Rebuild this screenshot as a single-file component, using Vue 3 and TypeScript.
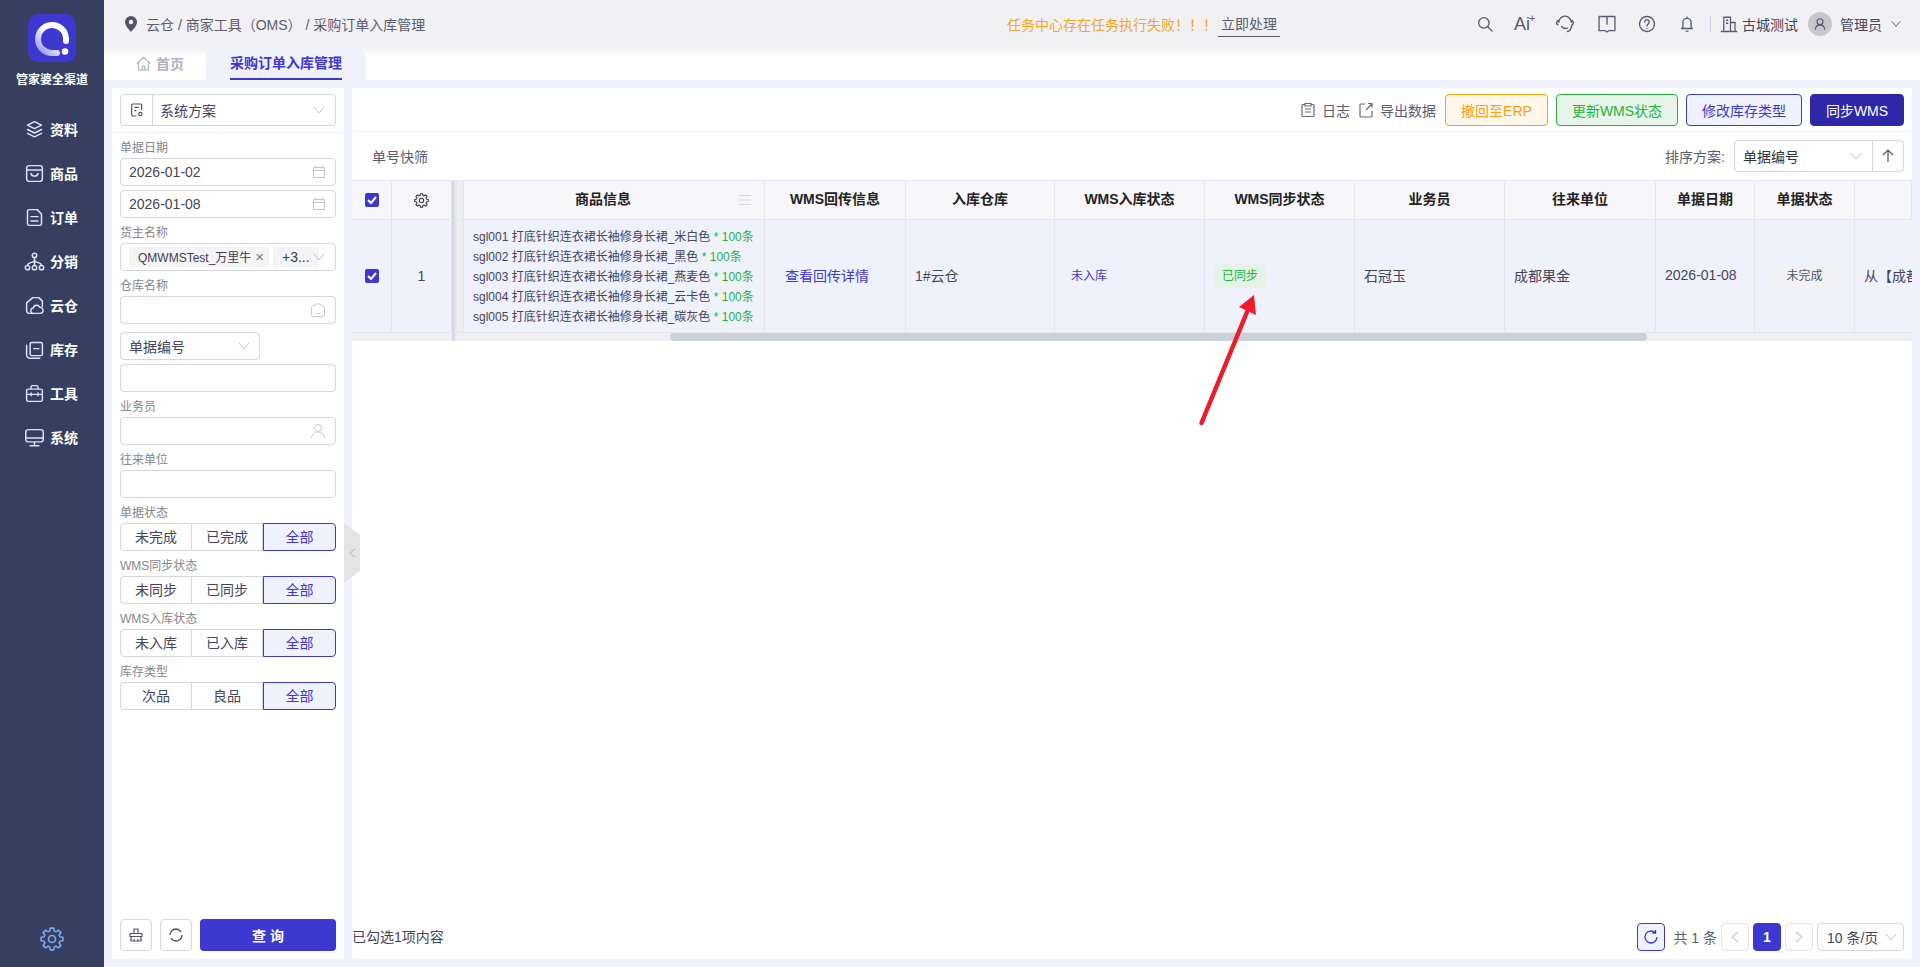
<script setup lang="ts">
interface NavItem {
  label: string
  d: string
}

const navItems: NavItem[] = [
  { label: '资料', d: 'M12 3l8 4-8 4-8-4zM4 12l8 4 8-4M4 16.500l8 4 8-4' },
  { label: '商品', d: 'M6 3h12a3 3 0 013 3v12a3 3 0 01-3 3H6a3 3 0 01-3-3V6a3 3 0 013-3zM3 8h18M8 12c1 4 7 4 8 0' },
  { label: '订单', d: 'M6 3h9l5 5v11a2 2 0 01-2 2H6a2 2 0 01-2-2V5a2 2 0 012-2zM8 11h8M8 16h8' },
  { label: '分销', d: 'M12 2.500a2.500 2.500 0 110 5 2.500 2.500 0 010-5zM4 16.500a2.500 2.500 0 110 5 2.500 2.500 0 010-5zM12 16.500a2.500 2.500 0 110 5 2.500 2.500 0 010-5zM20 16.500a2.500 2.500 0 110 5 2.500 2.500 0 010-5zM12 7.500v9M4 16.500c0-4 8-3 8-6 0 3 8 2 8 6' },
  { label: '云仓', d: 'M9 21H6a3 3 0 01-3-3V9l7-6h7l4 4v6M11 21a3 3 0 01-.5-6 4 4 0 017.500-1 3.500 3.500 0 01.5 7z' },
  { label: '库存', d: 'M7 6a2 2 0 012-2h10a2 2 0 012 2v11a2 2 0 01-2 2H9a2 2 0 01-2-2zM3 7v11a4 4 0 004 4h11M11 11h6' },
  { label: '工具', d: 'M3 9a2 2 0 012-2h14a2 2 0 012 2v10a2 2 0 01-2 2H5a2 2 0 01-2-2zM8 7V5a2 2 0 012-2h4a2 2 0 012 2v2M3 13h18M8 11.500v3M16 11.500v3' },
  { label: '系统', d: 'M5 3h14a3 3 0 013 3v8a3 3 0 01-3 3H5a3 3 0 01-3-3V6a3 3 0 013-3zM2 12.500h20M12 17v4M7 21.500h10' }
]

const segments = [
  { label: '单据状态', options: ['未完成', '已完成', '全部'] },
  { label: 'WMS同步状态', options: ['未同步', '已同步', '全部'] },
  { label: 'WMS入库状态', options: ['未入库', '已入库', '全部'] },
  { label: '库存类型', options: ['次品', '良品', '全部'] }
]

const headers = ['WMS回传信息', '入库仓库', 'WMS入库状态', 'WMS同步状态', '业务员', '往来单位', '单据日期', '单据状态', '']

const goods = [
  { sku: 'sgl001', color: '米白色' },
  { sku: 'sgl002', color: '黑色' },
  { sku: 'sgl003', color: '燕麦色' },
  { sku: 'sgl004', color: '云卡色' },
  { sku: 'sgl005', color: '碳灰色' }
]

// eight toothed cog, centred on 12,12
const cogPath = (() => {
  const pts: string[] = []
  for (let i = 0; i < 8; i++) {
    const a = (i * Math.PI) / 4
    for (const [off, r] of [[-0.28, 8.2], [-0.16, 11], [0.16, 11], [0.28, 8.2]]) {
      pts.push(`${(12 + r * Math.cos(a + off)).toFixed(2)} ${(12 + r * Math.sin(a + off)).toFixed(2)}`)
    }
  }
  return `M${pts.join('L')}Z`
})()
</script>

<template>
  <div class="app">
    <aside class="sidebar">
      <div class="logo">
        <svg width="48" height="48" viewBox="0 0 48 48">
          <defs>
            <linearGradient id="ring" x1="0" y1="1" x2="1" y2="0">
              <stop offset="0.1" stop-color="#a5a2ea" />
              <stop offset="0.55" stop-color="#ffffff" />
            </linearGradient>
          </defs>
          <rect width="48" height="48" rx="10" fill="#3d38d0" />
          <path d="M38 27v-3a14 14 0 1 0-14 15h5" fill="none" stroke="url(#ring)" stroke-width="6" stroke-linecap="round" />
          <circle cx="37" cy="37.500" r="3.300" fill="#fff" />
        </svg>
      </div>
      <div class="brand">管家婆全渠道</div>
      <nav class="nav">
        <a v-for="item in navItems" :key="item.label" class="nav-item">
          <svg width="21" height="21" viewBox="0 0 24 24" fill="none" stroke="#dbe3fa" stroke-width="1.700" stroke-linejoin="round" stroke-linecap="round">
            <path :d="item.d" />
          </svg>
          <span>{{ item.label }}</span>
        </a>
      </nav>
      <div class="nav-gear">
        <svg width="24" height="24" viewBox="0 0 24 24" fill="none" stroke="#7fa6ee" stroke-width="1.600" stroke-linejoin="round">
          <path :d="cogPath" />
          <circle cx="12" cy="12" r="3.500" />
        </svg>
      </div>
    </aside>

    <div class="page">
      <header class="topbar">
        <div class="crumbs">
          <svg width="12" height="16" viewBox="0 0 12 16">
            <path d="M6 0a6 6 0 016 6c0 3.500-3.500 7-6 10C3.500 13 0 9.500 0 6a6 6 0 016-6z" fill="#55556a" />
            <circle cx="6" cy="6" r="2.200" fill="#f1f1f4" />
          </svg>
          <span>云仓 / 商家工具（OMS） / 采购订单入库管理</span>
        </div>
        <div class="notice">
          <span class="notice-text">任务中心存在任务执行失败！！！</span>
          <span class="notice-link">立即处理</span>
        </div>
        <div class="tools">
          <svg class="tool" width="18" height="18" viewBox="0 0 24 24" fill="none" stroke="#5b5b6e" stroke-width="1.800" stroke-linecap="round">
            <circle cx="10.500" cy="10.500" r="7" /><path d="M16 16l5.500 5.500" />
          </svg>
          <span class="tool tool-ai">Ai<i>+</i></span>
          <svg class="tool" width="20" height="20" viewBox="0 0 24 24" fill="none" stroke="#5b5b6e" stroke-width="1.700" stroke-linecap="round">
            <path d="M4.500 10a7.500 7.500 0 0115 0M3.500 8c-2 1-2 4 0 5M20.500 8c2 1 2 4 0 5M8 15c2 2.500 5 2.500 7 2M15 21c3-.5 4.500-3 5-7" />
          </svg>
          <svg class="tool tool-book" width="20" height="20" viewBox="0 0 24 24" fill="none" stroke="#5b5b6e" stroke-width="1.600" stroke-linejoin="round">
            <path d="M2.500 3h19v17H14l-2 1.500L10 20H2.500zM12 3v10" />
          </svg>
          <svg class="tool" width="18" height="18" viewBox="0 0 24 24" fill="none" stroke="#5b5b6e" stroke-width="1.800" stroke-linecap="round">
            <circle cx="12" cy="12" r="10" /><path d="M9 9.500a3 3 0 115 2c-1 .8-2 1.300-2 3M12 17.800v.2" />
          </svg>
          <svg class="tool tool-bell" width="18" height="18" viewBox="0 0 24 24" fill="none" stroke="#5b5b6e" stroke-width="1.800" stroke-linejoin="round">
            <path d="M6.500 18V10a5.500 5.500 0 0111 0v8zM4 18h16M10 21.500h4M12 2v2.500" />
          </svg>
          <i class="tools-sep"></i>
          <svg width="18" height="18" viewBox="0 0 24 24" fill="none" stroke="#5b5b6e" stroke-width="1.700">
            <path d="M5 22V3h9v19M14 10h6v12M1 22h22M8 7h3M8 11h3" />
          </svg>
          <span class="org">古城测试</span>
          <span class="avatar">
            <svg width="14" height="14" viewBox="0 0 24 24" fill="none" stroke="#55556a" stroke-width="2">
              <circle cx="12" cy="8" r="5" /><path d="M4 22c0-5 3-8 8-8s8 3 8 8" />
            </svg>
          </span>
          <span class="user">管理员</span>
          <svg width="12" height="12" viewBox="0 0 12 12" fill="none" stroke="#6b6b7c"><path d="M2 3.500l4 5 4-5" /></svg>
        </div>
      </header>

      <div class="tabs">
        <a class="tab tab-home">
          <svg width="15" height="15" viewBox="0 0 24 24" fill="none" stroke="#b4b9c8" stroke-width="2">
            <path d="M1 12L12 2l11 10M4 10v12h16V10M10 22v-6h4v6" />
          </svg>
          首页
        </a>
        <a class="tab tab-active"><span>采购订单入库管理</span></a>
      </div>

      <div class="content">
        <section class="filter">
          <div class="scheme">
            <span class="scheme-icon">
              <svg width="16" height="16" viewBox="0 0 24 24" fill="none" stroke="#55556a" stroke-width="1.800">
                <path d="M11 21H6a2 2 0 01-2-2V5a2 2 0 012-2h11a2 2 0 012 2v7M8 8h7M8 13h3" /><circle cx="17" cy="18" r="2.500" />
              </svg>
            </span>
            <span class="scheme-text">系统方案</span>
            <svg class="chev" width="12" height="12" viewBox="0 0 12 12" fill="none" stroke="#c4c6cf"><path d="M1 3l5 6 5-6" /></svg>
          </div>
          <div class="filter-body">
            <label class="field-label field-first">单据日期</label>
            <div class="input">
              <span>2026-01-02</span>
              <svg width="14" height="14" viewBox="0 0 14 14" fill="none" stroke="#c4c6cf"><path d="M1.500 2.500h11v10h-11zM1.500 5.500h11M4 .5v3M10 .5v3" /></svg>
            </div>
            <div class="input input-next">
              <span>2026-01-08</span>
              <svg width="14" height="14" viewBox="0 0 14 14" fill="none" stroke="#c4c6cf"><path d="M1.500 2.500h11v10h-11zM1.500 5.500h11M4 .5v3M10 .5v3" /></svg>
            </div>
            <label class="field-label">货主名称</label>
            <div class="input input-tags">
              <span class="tag">QMWMSTest_万里牛<i>×</i></span>
              <span class="tag tag-more">+3...</span>
              <svg class="tags-chev" width="12" height="12" viewBox="0 0 12 12" fill="none" stroke="#c4c6cf"><path d="M1 3l5 6 5-6" /></svg>
            </div>
            <label class="field-label">仓库名称</label>
            <div class="input">
              <span></span>
              <svg width="16" height="16" viewBox="0 0 16 16" fill="none" stroke="#c9c9d2"><path d="M1.500 5L8 1.500 14.500 5v8a1.500 1.500 0 01-1.500 1.500H3A1.500 1.500 0 011.500 13zM5.500 11.500h5" /></svg>
            </div>
            <div class="input input-select">
              <span>单据编号</span>
              <svg width="12" height="12" viewBox="0 0 12 12" fill="none" stroke="#c4c6cf"><path d="M1 3l5 6 5-6" /></svg>
            </div>
            <div class="input input-next"></div>
            <label class="field-label">业务员</label>
            <div class="input">
              <span></span>
              <svg width="16" height="16" viewBox="0 0 16 16" fill="none" stroke="#c9c9d2"><circle cx="8" cy="5" r="3.500" /><path d="M1.500 15c.5-4 3-6 6.500-6s6 2 6.500 6" /></svg>
            </div>
            <label class="field-label">往来单位</label>
            <div class="input"></div>
            <template v-for="group in segments" :key="group.label">
              <label class="field-label">{{ group.label }}</label>
              <div class="segment">
                <span v-for="(opt, i) in group.options" :key="opt" :class="{ on: i === 2 }">{{ opt }}</span>
              </div>
            </template>
          </div>
          <div class="filter-actions">
            <button class="square-btn">
              <svg width="14" height="14" viewBox="0 0 14 14" fill="none" stroke="#55556a" stroke-width="1.200"><path d="M5 5V1h4v4M1 5.500h12v3H1zM2 8.500V13h10V8.500M5 13v-2M9 13v-2" /></svg>
            </button>
            <button class="square-btn">
              <svg width="16" height="16" viewBox="0 0 16 16" fill="none" stroke-width="1.300">
                <path d="M2 8a6 6 0 016-6 6 6 0 015 3" stroke="#55556a" /><path d="M14 8a6 6 0 01-6 6 6 6 0 01-5-3" stroke="#55556a" />
              </svg>
            </button>
            <button class="query-btn">查 询</button>
          </div>
        </section>

        <section class="main">
          <div class="toolbar">
            <a class="tool-link">
              <svg width="14" height="16" viewBox="0 0 14 16" fill="none" stroke="#6b6b7c" stroke-width="1.200"><path d="M4 2.500H2a1 1 0 00-1 1v10a1 1 0 001 1h10a1 1 0 001-1v-10a1 1 0 00-1-1h-2M4 1.500h6v2.500H4zM4 7h6M4 10h6" /></svg>
              日志
            </a>
            <a class="tool-link tool-export">
              <svg width="14" height="16" viewBox="0 0 14 16" fill="none" stroke="#6b6b7c" stroke-width="1.200"><path d="M6 2H2a1 1 0 00-1 1v11a1 1 0 001 1h10a1 1 0 001-1V9M7 8l6-6.500M9 1.500h4v4" /></svg>
              导出数据
            </a>
            <button class="btn btn-orange">撤回至ERP</button>
            <button class="btn btn-green">更新WMS状态</button>
            <button class="btn btn-blue">修改库存类型</button>
            <button class="btn btn-solid">同步WMS</button>
          </div>
          <div class="quickbar">
            <span class="quick">单号快筛</span>
            <span class="sort-label">排序方案:</span>
            <div class="sort">
              <span>单据编号</span>
              <svg class="chev" width="12" height="12" viewBox="0 0 12 12" fill="none" stroke="#c4c6cf"><path d="M1 3l5 6 5-6" /></svg>
              <i class="sort-dir">
                <svg width="12" height="14" viewBox="0 0 12 14" fill="none" stroke="#55556a" stroke-width="1.200"><path d="M6 13V1M1 6l5-5 5 5" /></svg>
              </i>
            </div>
          </div>

          <div class="table">
            <div class="th">
              <span class="checkbox"><svg width="10" height="10" viewBox="0 0 10 10" fill="none" stroke="#fff" stroke-width="2"><path d="M1 5l3 3 5-6" /></svg></span>
            </div>
            <div class="th">
              <svg width="15" height="15" viewBox="0 0 24 24" fill="none" stroke="#333" stroke-width="1.700" stroke-linejoin="round">
                <path :d="cogPath" />
                <circle cx="12" cy="12" r="3.500" />
              </svg>
            </div>
            <div class="th gutter"></div>
            <div class="th th-goods">
              <span class="th-text">商品信息</span>
              <svg class="th-menu" width="12" height="12" viewBox="0 0 12 12" stroke="#d8d8de"><path d="M0 1.500h12M0 6h12M0 10.500h12" /></svg>
            </div>
            <div v-for="(h, i) in headers" :key="i" class="th"><span class="th-text">{{ h }}</span></div>

            <div class="td">
              <span class="checkbox"><svg width="10" height="10" viewBox="0 0 10 10" fill="none" stroke="#fff" stroke-width="2"><path d="M1 5l3 3 5-6" /></svg></span>
            </div>
            <div class="td">1</div>
            <div class="td gutter"></div>
            <div class="td td-goods">
              <p v-for="g in goods" :key="g.sku">
                {{ g.sku }} 打底针织连衣裙长袖修身长裙_{{ g.color }} <em>* 100条</em>
              </p>
            </div>
            <div class="td link">查看回传详情</div>
            <div class="td left lift">1#云仓</div>
            <div class="td left small-blue">未入库</div>
            <div class="td left badge-cell"><span class="badge badge-green">已同步</span></div>
            <div class="td left lift">石冠玉</div>
            <div class="td left lift">成都果金</div>
            <div class="td left lift">2026-01-08</div>
            <div class="td"><span class="badge badge-grey">未完成</span></div>
            <div class="td left lift clip">从【成都果金】</div>
          </div>
          <div class="scrollbar">
            <i class="scroll-shadow"></i>
            <i class="scroll-thumb"></i>
          </div>

          <div class="footer">
            <span class="selected">已勾选1项内容</span>
            <button class="page-btn page-refresh">
              <svg width="16" height="16" viewBox="0 0 16 16" fill="none" stroke="#3d38d0" stroke-width="1.300"><path d="M14 8a6 6 0 11-1.800-4.300M12.500 1v3h-3" /></svg>
            </button>
            <span class="total">共 1 条</span>
            <button class="page-btn">
              <svg width="10" height="12" viewBox="0 0 10 12" fill="none" stroke="#c9c9d2" stroke-width="1.200"><path d="M8 1L2 6l6 5" /></svg>
            </button>
            <button class="page-btn page-current">1</button>
            <button class="page-btn">
              <svg width="10" height="12" viewBox="0 0 10 12" fill="none" stroke="#c9c9d2" stroke-width="1.200"><path d="M2 1l6 5-6 5" /></svg>
            </button>
            <div class="page-size">
              <span>10 条/页</span>
              <svg width="12" height="12" viewBox="0 0 12 12" fill="none" stroke="#c4c6cf"><path d="M1 3l5 6 5-6" /></svg>
            </div>
          </div>

          <!-- annotation drawn over the table -->
          <svg class="arrow" width="70" height="140" viewBox="0 0 70 140">
            <path d="M8.500 133L54 22" stroke="#ee1c2b" stroke-width="4.500" stroke-linecap="round" />
            <polygon points="61,5 46,17 63,25" fill="#ee1c2b" />
          </svg>
        </section>

        <div class="collapse">
          <svg width="7" height="10" viewBox="0 0 7 10" fill="none" stroke="#b5b5bd"><path d="M6 1L1 5l5 4" /></svg>
        </div>
      </div>
    </div>
  </div>
</template>

<style scoped>
.app {
  display: flex;
  width: 1920px;
  height: 967px;
  overflow: hidden;
  font-family: 'Liberation Sans', 'Noto Sans CJK SC', sans-serif;
  font-size: 14px;
  color: #45455a;
}

.sidebar {
  width: 104px;
  flex: none;
  background: #363f5f;
  display: flex;
  flex-direction: column;
  align-items: center;
}

.logo {
  margin-top: 14px;
  height: 48px;
}

.brand {
  margin-top: 10px;
  color: #fff;
  font-size: 12px;
  font-weight: 700;
  line-height: 16px;
  white-space: nowrap;
}

.nav {
  margin-top: 19px;
  width: 100%;
}

.nav-item {
  height: 44px;
  display: flex;
  align-items: center;
  gap: 5px;
  padding-left: 24px;
  color: #fff;
  font-weight: 700;
}

.nav-gear {
  margin-top: auto;
  margin-bottom: 16px;
  height: 24px;
}

.page {
  flex: 1;
  min-width: 0;
  display: flex;
  flex-direction: column;
}

.topbar {
  height: 48px;
  flex: none;
  background: #f1f1f4;
  display: flex;
  align-items: center;
  padding-left: 21px;
  position: relative;
}

.crumbs {
  display: flex;
  align-items: center;
  gap: 9px;
  width: 882px;
  color: #5c5c6e;
  white-space: pre;
}

.notice {
  display: flex;
  align-items: center;
  gap: 1px;
}

.notice-text {
  color: #f6a623;
}

.notice-link {
  color: #5c5c6e;
  line-height: 24px;
  padding: 0 3px;
  border-bottom: 1px solid #55556a;
}

.tools {
  position: absolute;
  right: 18px;
  top: 0;
  height: 48px;
  display: flex;
  align-items: center;
  color: #45455a;
}

.tool {
  margin-right: 22px;
}

.tool-ai {
  position: relative;
  width: 18px;
  margin-left: -2px;
  margin-right: 23px;
  font-size: 18px;
  color: #5b5b6e;
  line-height: 18px;
}

.tool-ai i {
  position: absolute;
  left: 15px;
  top: -6px;
  font-size: 11px;
  font-style: normal;
}

.tool-book {
  margin-right: 21px;
}

.tool-bell {
  margin-right: 12px;
}

.tools-sep {
  width: 1px;
  height: 16px;
  background: #c9cfe6;
  margin: 0 9px 0 2px;
}

.org {
  margin-left: 4px;
}

.avatar {
  width: 24px;
  height: 24px;
  border-radius: 50%;
  background: #c8c8cc;
  display: flex;
  align-items: center;
  justify-content: center;
  margin: 0 8px 0 10px;
}

.user {
  margin-right: 8px;
}

.tabs {
  height: 32px;
  flex: none;
  background: linear-gradient(#f1f1f4, #fff 8px);
  display: flex;
  padding-left: 22px;
}

.tab {
  display: flex;
  align-items: center;
  font-weight: 700;
}

.tab-home {
  width: 70px;
  gap: 5px;
  padding-left: 10px;
  padding-bottom: 2px;
  box-sizing: border-box;
  color: #aeb3c3;
}

.tab-active {
  width: 160px;
  margin-left: 10px;
  justify-content: center;
  background: #eff1fd;
  border-radius: 10px 10px 0 0;
  color: #3d38d0;
}

.tab-active span {
  height: 32px;
  line-height: 30px;
  border-bottom: 2px solid #3d38d0;
  box-sizing: border-box;
}

.content {
  flex: 1;
  min-height: 0;
  background: #eff1fd;
  padding: 8px;
  display: flex;
  gap: 8px;
  position: relative;
}

.filter {
  width: 232px;
  flex: none;
  background: #fff;
  display: flex;
  flex-direction: column;
}

.scheme {
  margin: 6px 8px;
  height: 32px;
  box-sizing: border-box;
  border: 1px solid #d6d6de;
  border-radius: 4px;
  display: flex;
  align-items: center;
}

.scheme-icon {
  width: 32px;
  height: 30px;
  box-sizing: border-box;
  border-right: 1px solid #d6d6de;
  display: flex;
  align-items: center;
  justify-content: center;
}

.scheme-text {
  flex: 1;
  padding-left: 7px;
}

.chev {
  margin-right: 10px;
}

.filter-body {
  border-top: 1px solid #eeeef2;
  padding: 0 8px;
  display: flex;
  flex-direction: column;
}

.field-label {
  height: 25px;
  box-sizing: border-box;
  padding-top: 7px;
  line-height: 17px;
  font-size: 12px;
  color: #85858f;
}

.input {
  height: 28px;
  flex: none;
  box-sizing: border-box;
  border: 1px solid #d6d6de;
  border-radius: 4px;
  display: flex;
  align-items: center;
  justify-content: space-between;
  padding: 0 9px 0 8px;
  background: #fff;
}

.input-next {
  margin-top: 4px;
}

.input-select {
  width: 140px;
  margin-top: 8px;
}

.input-tags {
  justify-content: flex-start;
  gap: 4px;
  position: relative;
  overflow: hidden;
}

.tag {
  width: 140px;
  flex: none;
  box-sizing: border-box;
  height: 20px;
  line-height: 20px;
  background: #f4f4f6;
  border-radius: 2px;
  padding-left: 9px;
  white-space: nowrap;
  font-size: 12px;
  color: #3d3d50;
}

.tag i {
  font-style: normal;
  margin-left: 4px;
  color: #777;
  font-size: 15px;
}

.tag-more {
  width: 46px;
  font-size: 14px;
}

.tags-chev {
  position: absolute;
  right: 10px;
  top: 7px;
}

.segment {
  height: 28px;
  flex: none;
  display: grid;
  grid-template-columns: 72px 71px 73px;
  text-align: center;
  line-height: 26px;
  color: #45455a;
}

.segment span {
  border: 1px solid #d6d6de;
  border-left-width: 0;
  box-sizing: border-box;
}

.segment span:first-child {
  border-left-width: 1px;
  border-radius: 4px 0 0 4px;
}

.segment .on {
  background: #eff1fd;
  border: 1px solid #3d38d0;
  border-radius: 0 4px 4px 0;
  color: #3d38d0;
}

.filter-actions {
  margin-top: auto;
  padding: 0 8px 8px;
  display: flex;
  gap: 8px;
}

.square-btn {
  width: 32px;
  height: 32px;
  padding: 0;
  background: #fff;
  border: 1px solid #d6d6de;
  border-radius: 4px;
  display: flex;
  align-items: center;
  justify-content: center;
}

.query-btn {
  flex: 1;
  height: 32px;
  border: none;
  border-radius: 4px;
  background: #3d38d0;
  color: #fff;
  font: inherit;
  font-weight: 700;
}

.main {
  flex: 1;
  min-width: 0;
  background: #fff;
  display: flex;
  flex-direction: column;
  position: relative;
}

.toolbar {
  height: 44px;
  flex: none;
  box-sizing: border-box;
  border-bottom: 1px solid #eeeef2;
  display: flex;
  align-items: center;
  justify-content: flex-end;
  padding: 6px 8px 6px 0;
  gap: 8px;
}

.tool-link {
  display: flex;
  align-items: center;
  gap: 7px;
  color: #5c5c6e;
}

.tool-export {
  margin-right: 1px;
  margin-left: 1px;
}

.btn {
  height: 32px;
  box-sizing: border-box;
  border-radius: 4px;
  border: 1px solid;
  padding: 0;
  font: inherit;
}

.btn-orange {
  width: 103px;
  color: #ff9f0a;
  background: #fff8ea;
  border-color: #ff9f0a;
}

.btn-green {
  width: 122px;
  color: #27b13a;
  background: #e7f4e9;
  border-color: #27b13a;
}

.btn-blue {
  width: 116px;
  color: #3d38d0;
  background: #eff1fd;
  border-color: #3d38d0;
}

.btn-solid {
  width: 94px;
  color: #fff;
  background: #2e27a8;
  border-color: #2e27a8;
}

.quickbar {
  height: 48px;
  flex: none;
  display: flex;
  align-items: center;
  padding: 0 8px 0 20px;
}

.quick {
  color: #5c5c6e;
  margin-right: auto;
}

.sort-label {
  color: #5c5c6e;
  margin-right: 9px;
}

.sort {
  width: 170px;
  height: 32px;
  box-sizing: border-box;
  border: 1px solid #d6d6de;
  border-radius: 4px;
  display: flex;
  align-items: center;
  padding-left: 8px;
  color: #333;
}

.sort > span {
  flex: 1;
}

.sort-dir {
  width: 31px;
  height: 30px;
  box-sizing: border-box;
  border-left: 1px solid #d6d6de;
  display: flex;
  align-items: center;
  justify-content: center;
}

.table {
  display: grid;
  grid-template-columns: 40px 60px 12px 301px 141px 149px 150px 150px 150px 151px 99px 100px 57px;
  grid-template-rows: 39px 113px;
  border-top: 1px solid #e6e7ee;
  flex: none;
  overflow: hidden;
}

.th,
.td {
  box-sizing: border-box;
  border-right: 1px solid #e6e7ee;
  border-bottom: 1px solid #e6e7ee;
  display: flex;
  align-items: center;
  justify-content: center;
  min-width: 0;
}

.th {
  background: #f6f6f9;
  color: #222;
  font-weight: 700;
  white-space: nowrap;
  position: relative;
}

.th-text {
  padding-bottom: 4px;
}

.th-goods {
  padding-right: 22px;
}

.td {
  background: #eff1fd;
  color: #45455a;
}

.gutter {
  background: linear-gradient(to right, #cfd1d8, #eeeef3 5px);
}

.th-menu {
  position: absolute;
  right: 13px;
  top: 13px;
}

.td-goods {
  display: block;
  padding: 7px 0 0 9px;
  font-size: 12px;
  white-space: nowrap;
}

.td-goods p {
  margin: 0;
  line-height: 20px;
}

.td-goods em {
  font-style: normal;
  color: #27b13a;
}

.link {
  color: #3d38d0;
  padding: 0 16px 3px 0;
}

.left {
  justify-content: flex-start;
  padding-left: 9px;
}

.lift {
  padding-bottom: 3px;
}

.small-blue {
  font-size: 12px;
  color: #3d38d0;
  padding: 0 0 3px 16px;
}

.badge {
  height: 24px;
  line-height: 24px;
  border-radius: 2px;
  font-size: 12px;
}

.badge-green {
  padding: 0 8px;
  background: #e5f3e6;
  color: #27b13a;
}

.badge-grey {
  padding: 0 15px;
  background: #f2f2f5;
  color: #55556a;
}

.clip {
  white-space: nowrap;
  overflow: hidden;
  border-right: none;
}

.checkbox {
  width: 14px;
  height: 14px;
  border-radius: 2px;
  background: #3d38d0;
  display: flex;
  align-items: center;
  justify-content: center;
}

.scrollbar {
  height: 8px;
  flex: none;
  background: #f0f0f4;
  position: relative;
}

.scroll-shadow {
  position: absolute;
  left: 100px;
  top: 0;
  width: 12px;
  height: 8px;
  background: linear-gradient(to right, #cfd1d8, #f0f0f4 5px);
}

.scroll-thumb {
  position: absolute;
  left: 318px;
  top: 0;
  width: 977px;
  height: 8px;
  border-radius: 4px;
  background: #ccd2da;
}

.footer {
  margin-top: auto;
  padding: 0 8px 8px 0;
  display: flex;
  align-items: center;
  gap: 4px;
}

.selected {
  margin-right: auto;
  padding-bottom: 2px;
  color: #45455a;
}

.page-btn {
  width: 28px;
  height: 28px;
  padding: 0;
  background: #fff;
  border: 1px solid #e3e3ea;
  border-radius: 4px;
  display: flex;
  align-items: center;
  justify-content: center;
  font: inherit;
}

.page-refresh {
  background: #eff1fd;
  border-color: #3d38d0;
  margin-right: 4px;
}

.total {
  color: #5c5c6e;
  white-space: pre;
}

.page-current {
  background: #3d38d0;
  border-color: #3d38d0;
  color: #fff;
  font-weight: 700;
}

.page-size {
  width: 87px;
  height: 28px;
  box-sizing: border-box;
  border: 1px solid #d6d6de;
  border-radius: 4px;
  display: flex;
  align-items: center;
  justify-content: space-between;
  padding: 0 6px 0 9px;
}

.arrow {
  position: absolute;
  left: 841px;
  top: 202px;
  overflow: visible;
}

.collapse {
  position: absolute;
  left: 240px;
  top: 443px;
  width: 16px;
  height: 60px;
  background: #e4e4e7;
  clip-path: polygon(0 0, 100% 20%, 100% 80%, 0 100%);
  display: flex;
  align-items: center;
  justify-content: center;
}
</style>

<style>
body {
  margin: 0;
}
</style>
